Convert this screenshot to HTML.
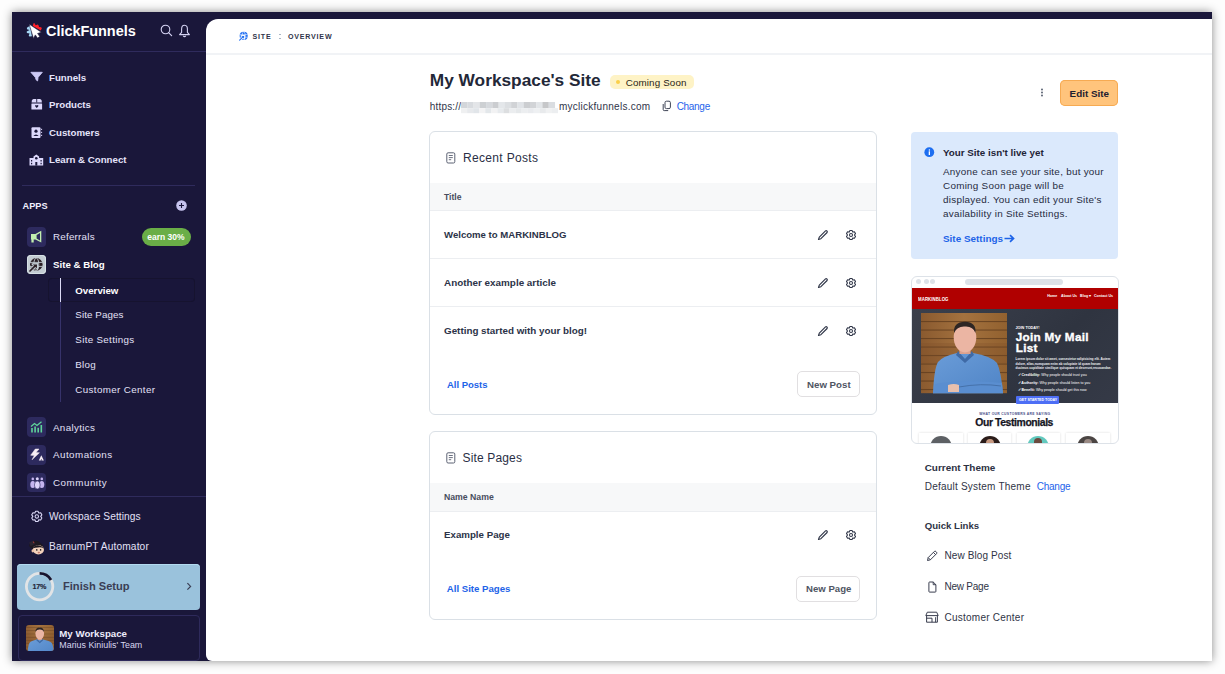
<!DOCTYPE html>
<html><head><meta charset="utf-8">
<style>
html,body{margin:0;padding:0;width:1225px;height:674px;overflow:hidden;background:#fdfdfd;font-family:"Liberation Sans",sans-serif;}
.a{position:absolute;}
.t{position:absolute;white-space:nowrap;line-height:1;}
.b{font-weight:bold;}
#win{position:absolute;left:12px;top:12px;width:1200px;height:649px;background:#1a173a;box-shadow:0 0 9px rgba(0,0,0,0.45);}
#main{position:absolute;left:206px;top:18.5px;width:1006px;height:642.5px;background:#fff;border-radius:12px 0 0 6px;}
.nav{color:#e6e4fb;font-weight:bold;font-size:9.7px;}
.side{color:#e3e1f7;font-size:10.2px;}
.ibox{position:absolute;width:19.5px;height:19.5px;border-radius:4px;background:#2d2a5e;}
svg{position:absolute;overflow:visible;}
</style></head><body>
<div id="win"></div>
<!-- SIDEBAR -->
<!-- logo -->
<svg style="left:22px;top:19px" width="24" height="22" viewBox="0 0 24 22">
  <path d="M10.8 6.9 L11.4 4.4 L12.3 3.9 L13.7 6.2 L15.6 5.4 L16.4 5.9 L17.1 7.9 L19.2 8.2 L19.8 9.3 L18.8 11.4 Z" fill="#ff2129"/>
  <path d="M8.3 6.6 L4.9 8.7 L5 10.2 L7.6 11.1 L4.7 12.5 L4.9 13.9 L7.6 14.6 L6.7 16.8 L7.5 17.6 L9.9 17.2 Z" fill="#a6d8f5"/>
  <path d="M7 5 L19.4 13.3 L15.6 14.5 L17.8 17.6 L15.5 19.1 L13.3 15.9 L11.5 19.4 Z" fill="#fff" stroke="#1a173a" stroke-width="0.6" stroke-linejoin="round"/>
</svg>
<div class="t b" style="left:46px;top:24px;font-size:14.5px;color:#fff;letter-spacing:-0.05px">ClickFunnels</div>
<svg style="left:160px;top:24px" width="14" height="14" viewBox="0 0 14 14"><circle cx="5.5" cy="5.5" r="4.3" fill="none" stroke="#d5d3f3" stroke-width="1.1"/><path d="M8.6 8.6 L11.6 11.6" stroke="#d5d3f3" stroke-width="1.2" stroke-linecap="round"/></svg>
<svg style="left:178px;top:24px" width="14" height="14" viewBox="0 0 14 14"><path d="M6.5 1.3 C4 1.3 3.6 3.4 3.6 5.2 L3.6 8.3 L1.6 10.6 L11.4 10.6 L9.4 8.3 L9.4 5.2 C9.4 3.4 9 1.3 6.5 1.3 Z" fill="none" stroke="#d5d3f3" stroke-width="1.1" stroke-linejoin="round"/><path d="M5.2 11.8 Q6.5 13.4 7.8 11.8" fill="none" stroke="#d5d3f3" stroke-width="1.1"/></svg>
<div class="a" style="left:12px;top:51px;width:194px;height:1px;background:#2f2b5c"></div>

<!-- nav -->
<svg style="left:30px;top:71px" width="13" height="11" viewBox="0 0 13 11"><path d="M0.9 1.3 L12.3 1.3 L8.1 6.3 L7.6 9.9 L6.3 9.1 L5.3 6.3 Z" fill="#cdc9f5" stroke="#cdc9f5" stroke-width="0.9" stroke-linejoin="round"/></svg>
<div class="t nav" style="left:49px;top:72.5px">Funnels</div>
<svg style="left:30.5px;top:98.5px" width="12" height="12" viewBox="0 0 12 12"><path d="M0.6 3.4 L0.9 1.6 Q1.2 0.1 2.6 0.1 L8.9 0.1 Q10.3 0.1 10.6 1.6 L10.9 3.4 Z" fill="#dcd8fb"/><rect x="5.3" y="0" width="0.9" height="3.5" fill="#1a173a"/><rect x="0.4" y="4.5" width="10.7" height="6.1" rx="0.5" fill="#dcd8fb"/><path d="M4.1 6.4 Q4.9 5.6 5.75 6.5 Q6.6 5.6 7.4 6.4 Q7.8 7.2 5.75 9 Q3.7 7.2 4.1 6.4Z" fill="#1a173a"/></svg>
<div class="t nav" style="left:49px;top:100px">Products</div>
<svg style="left:30.5px;top:126.5px" width="12" height="12" viewBox="0 0 12 12"><rect x="0.5" y="0.3" width="9" height="10.8" rx="1" fill="#dcd8fb"/><circle cx="5" cy="4.2" r="1.6" fill="#1a173a"/><path d="M2.3 9 Q5 5.8 7.7 9 Z" fill="#1a173a"/><path d="M10.6 1.8 L10.6 3 M10.6 4.8 L10.6 6 M10.6 7.8 L10.6 9" stroke="#dcd8fb" stroke-width="1"/></svg>
<div class="t nav" style="left:49px;top:127.6px">Customers</div>
<svg style="left:28.5px;top:153.5px" width="15" height="12" viewBox="0 0 15 12"><path d="M0.5 4 L4.5 4 L4.5 2.5 L7.3 0.5 L10.1 2.5 L10.1 4 L14.2 4 L14.2 11.6 L0.5 11.6 Z" fill="#dcd8fb"/><circle cx="7.3" cy="4.2" r="1.3" fill="#1a173a"/><rect x="6.3" y="8" width="2" height="3.6" fill="#1a173a"/><rect x="2" y="6" width="1.2" height="1.5" fill="#1a173a"/><rect x="2" y="8.8" width="1.2" height="1.5" fill="#1a173a"/><rect x="11.5" y="6" width="1.2" height="1.5" fill="#1a173a"/><rect x="11.5" y="8.8" width="1.2" height="1.5" fill="#1a173a"/></svg>
<div class="t nav" style="left:49px;top:155px">Learn &amp; Connect</div>
<div class="a" style="left:22px;top:185px;width:173px;height:1px;background:#2f2b5c"></div>

<!-- apps -->
<div class="t b" style="left:22.5px;top:201.5px;font-size:9.2px;color:#f1f0ff">APPS</div>
<svg style="left:176px;top:200px" width="11" height="11" viewBox="0 0 11 11"><circle cx="5.5" cy="5.5" r="5.3" fill="#c6c3ee"/><path d="M5.5 3 L5.5 8 M3 5.5 L8 5.5" stroke="#1a173a" stroke-width="1.1"/></svg>

<div class="ibox" style="left:26.7px;top:227px"></div>
<svg style="left:31px;top:231px" width="12" height="12" viewBox="0 0 12 12"><path d="M0 3 L4.4 3 L10.3 -0.2 L10.3 11.6 L4.4 8.6 L2.7 8.6 L2.7 11.4 L0.4 11.4 L0.4 8.6 L0 8.6 Z" fill="#c2eeb0"/><path d="M5.6 4 L9 2.1 L9 9.5 L5.6 7.6 Z" fill="#2d2a5e"/></svg>
<div class="t side" style="left:53px;top:232px;font-size:9.8px;letter-spacing:0.231px">Referrals</div>
<div class="a" style="left:142px;top:228px;width:48.5px;height:18px;border-radius:9px;background:#6aae47"></div>
<div class="t b" style="left:147.2px;top:232.6px;font-size:8.5px;color:#fff">earn 30%</div>

<div class="ibox" style="left:26.9px;top:255.1px;width:19px;height:19px;background:#c3ccd2;box-shadow:inset 0 0 0 1px #d6e0e5"></div>
<svg style="left:27px;top:255px" width="19" height="19" viewBox="0 0 19 19"><circle cx="9.3" cy="9.4" r="6.3" fill="#2a1e24"/><ellipse cx="9.3" cy="9.4" rx="2.5" ry="6.3" fill="none" stroke="#c3ccd2" stroke-width="0.9"/><path d="M3 7.4 L15.6 7.4 M3 11.4 L15.6 11.4" stroke="#c3ccd2" stroke-width="0.9"/><path d="M2.6 16.4 L7.6 11.4" stroke="#c3ccd2" stroke-width="3.4" stroke-linecap="round"/><path d="M5.2 9 L10.6 8.7 L10.3 14.1 Z" fill="#c3ccd2" stroke="#c3ccd2" stroke-width="1.6" stroke-linejoin="round"/><path d="M3 16 L7.6 11.4" stroke="#2a1e24" stroke-width="1.7" stroke-linecap="round"/><path d="M5.9 9.6 L10 9.4 L9.8 13.5 Z" fill="#2a1e24"/></svg>
<div class="t nav" style="left:53px;top:260.4px;font-size:9.7px;color:#fff">Site &amp; Blog</div>

<div class="a" style="left:48px;top:278px;width:147px;height:24px;border-radius:4px;background:#19163a;box-shadow:inset 0 0 0 1px #16132f"></div>
<div class="a" style="left:60px;top:278px;width:1px;height:124px;background:#36326a"></div>
<div class="a" style="left:60px;top:278px;width:1px;height:24px;background:#dcdaf6"></div>
<div class="t nav" style="left:75.3px;top:286px;color:#fff">Overview</div>
<div class="t side" style="left:75.3px;top:310px;font-size:9.8px;letter-spacing:0.078px">Site Pages</div>
<div class="t side" style="left:75.3px;top:335px;font-size:9.8px;letter-spacing:0.315px;">Site Settings</div>
<div class="t side" style="left:75.3px;top:360px;font-size:9.8px;letter-spacing:0.262px;">Blog</div>
<div class="t side" style="left:75.3px;top:385px;font-size:9.8px;letter-spacing:0.363px">Customer Center</div>

<div class="ibox" style="left:26.7px;top:417.2px"></div>
<svg style="left:30px;top:421px" width="13" height="12" viewBox="0 0 13 12"><path d="M1 5.5 L4.5 2.5 L7 4.5 L11.5 0.8" stroke="#5fd39a" stroke-width="1.3" fill="none"/><rect x="1.2" y="7" width="1.6" height="4.5" fill="#5fd39a"/><rect x="4.3" y="5.5" width="1.6" height="6" fill="#5fd39a"/><rect x="7.4" y="6.8" width="1.6" height="4.7" fill="#5fd39a"/><rect x="10.5" y="4" width="1.6" height="7.5" fill="#5fd39a"/></svg>
<div class="t side" style="left:53px;top:422.5px;font-size:9.8px;letter-spacing:0.336px">Analytics</div>
<div class="ibox" style="left:26.7px;top:445px"></div>
<svg style="left:29.5px;top:448px" width="14" height="14" viewBox="0 0 14 14"><path d="M5.3 1 L9 1 L6 4.6 L9.4 4.8 L2 11.8 L4.4 7.4 L0.7 7.2 Z" fill="#f8eef4" stroke="#f8eef4" stroke-width="0.5" stroke-linejoin="round"/><path d="M8.8 12.4 L11.3 7.2 L13.9 12.4 Z" fill="#f8eef4"/><path d="M10.6 12.4 L11.3 10.8 L12 12.4 Z" fill="#2d2a5e"/></svg>
<div class="t side" style="left:53px;top:450.2px;font-size:9.8px;letter-spacing:0.473px">Automations</div>
<div class="ibox" style="left:26.7px;top:472.8px"></div>
<svg style="left:29.5px;top:476.5px" width="15" height="13" viewBox="0 0 15 13"><circle cx="2.8" cy="1.9" r="1.3" fill="#c4b4ef"/><circle cx="11.8" cy="1.9" r="1.3" fill="#c4b4ef"/><ellipse cx="2.8" cy="7.6" rx="2.5" ry="3.5" fill="#c4b4ef"/><ellipse cx="11.8" cy="7.6" rx="2.5" ry="3.5" fill="#c4b4ef"/><circle cx="7.3" cy="1.8" r="1.5" fill="#ddd3fb"/><ellipse cx="7.3" cy="8" rx="2.9" ry="4" fill="#ddd3fb" stroke="#2d2a5e" stroke-width="0.6"/></svg>
<div class="t side" style="left:53px;top:477.8px;font-size:9.8px;letter-spacing:0.518px">Community</div>
<div class="a" style="left:12px;top:496px;width:194px;height:1px;background:#2f2b5c"></div>

<svg style="left:29.5px;top:510px" width="13" height="13" viewBox="0 0 13 13"><path d="M4.85 3.02 L5.61 1.24 L7.99 1.24 L8.75 3.02 L10.68 2.79 L11.87 4.85 L10.70 6.40 L11.87 7.95 L10.68 10.01 L8.75 9.78 L7.99 11.56 L5.61 11.56 L4.85 9.78 L2.92 10.01 L1.73 7.95 L2.90 6.40 L1.73 4.85 L2.92 2.79 Z" fill="none" stroke="#dcdaf8" stroke-width="1.05" stroke-linejoin="round"/><circle cx="6.8" cy="6.4" r="1.7" fill="none" stroke="#dcdaf8" stroke-width="1.05"/></svg>
<div class="t side" style="left:49px;top:512px;font-size:10.2px;letter-spacing:0.069px">Workspace Settings</div>
<svg style="left:27.5px;top:540px" width="18" height="15" viewBox="0 0 18 15"><path d="M1 6 Q2 1.5 6 1 L8 0.6 Q11.5 1 13 3.5 Q16 5.5 15.5 9 L4 9 Z" fill="#1d1820"/><path d="M1.2 2.6 L5.6 0.4 L6.6 4.2 L2.6 6 Z" fill="#2a2430"/><path d="M5.4 1.6 L6 3.2" stroke="#c23a3a" stroke-width="0.9"/><ellipse cx="10.4" cy="9.8" rx="5.6" ry="4.6" fill="#f3d2bc"/><path d="M4.6 8.5 Q7 4.6 11 5.4 Q14.6 5.8 15.8 8.6 Q13 6.8 10 7.4 Q7 7.4 4.6 8.5 Z" fill="#1d1820"/><circle cx="8.8" cy="9.9" r="0.8" fill="#1a1a1a"/><circle cx="12.6" cy="9.9" r="0.8" fill="#1a1a1a"/><ellipse cx="10.8" cy="12.6" rx="1.2" ry="0.8" fill="#c77a6c"/><ellipse cx="4.8" cy="10.8" rx="1.3" ry="1.6" fill="#ebc2a8"/></svg>
<div class="t side" style="left:49px;top:542.3px;font-size:10.2px;letter-spacing:0.118px">BarnumPT Automator</div>

<div class="a" style="left:17px;top:564px;width:183px;height:46px;border-radius:4px;background:#9ac2dc;box-shadow:inset 0 1px 0 #b3daf0"></div>
<svg style="left:25px;top:572px" width="30" height="30" viewBox="0 0 30 30"><circle cx="14.6" cy="14.6" r="13.2" fill="none" stroke="#e2e4e6" stroke-width="2.8"/><path d="M14.6 1.4 A13.2 13.2 0 0 1 26.03 8" fill="none" stroke="#15132f" stroke-width="2.8"/></svg>
<div class="t b" style="left:32.6px;top:583px;font-size:7.2px;color:#23263a;letter-spacing:-0.3px;-webkit-text-stroke:0.15px #23263a">17%</div>
<div class="t b" style="left:63px;top:581px;font-size:11.1px;color:#3a3e54">Finish Setup</div>
<svg style="left:185px;top:581px" width="8" height="11" viewBox="0 0 8 11"><path d="M2.4 2.2 L5.6 5.4 L2.4 8.6" fill="none" stroke="#3a3e54" stroke-width="1.2"/></svg>

<div class="a" style="left:17.5px;top:615px;width:182px;height:46px;border-radius:4px;border:1px solid #2e2a5b;box-sizing:border-box"></div>
<div class="a" style="left:26px;top:625px;width:27.5px;height:26px;border-radius:3px;overflow:hidden"><svg style="left:0;top:0" width="27.5" height="26" viewBox="8 2 72 68" preserveAspectRatio="xMidYMid slice">
  <defs><linearGradient id="wd2" x1="0" y1="0" x2="1" y2="0"><stop offset="0" stop-color="#8a5a2f"/><stop offset="0.5" stop-color="#a4723f"/><stop offset="1" stop-color="#92612f"/></linearGradient>
  <linearGradient id="sh2" x1="0" y1="0" x2="1" y2="1"><stop offset="0" stop-color="#6a9cd8"/><stop offset="1" stop-color="#4f84c6"/></linearGradient></defs>
  <rect width="86" height="80.2" fill="url(#wd2)"/>
  <rect x="0" y="8.0" width="86" height="1.1" fill="#5e3b1d" opacity="0.75"/><rect x="0" y="16.5" width="86" height="1.1" fill="#5e3b1d" opacity="0.75"/><rect x="0" y="25.0" width="86" height="1.1" fill="#5e3b1d" opacity="0.75"/><rect x="0" y="33.5" width="86" height="1.1" fill="#5e3b1d" opacity="0.75"/><rect x="0" y="42.0" width="86" height="1.1" fill="#5e3b1d" opacity="0.75"/><rect x="0" y="50.5" width="86" height="1.1" fill="#5e3b1d" opacity="0.75"/><rect x="0" y="59.0" width="86" height="1.1" fill="#5e3b1d" opacity="0.75"/><rect x="0" y="67.5" width="86" height="1.1" fill="#5e3b1d" opacity="0.75"/><rect x="0" y="76.0" width="86" height="1.1" fill="#5e3b1d" opacity="0.75"/>
  <rect x="0" y="30" width="86" height="20" fill="#7a4c26" opacity="0.25"/>
  <path d="M36 40 L52 40 Q70 43 76 50 Q80 58 82 80.2 L12 80.2 Q13 56 17 49 Q22 43 36 40 Z" fill="url(#sh2)"/>
  <path d="M37 38 L44 46 L51 38 L53 42 L44 50 L35 42 Z" fill="#3f6aa6"/>
  <path d="M14 71 Q40 66 81 70 L82 80.2 L12 80.2 Z" fill="#5a8ed0"/>
  <path d="M27 72 Q33 70 38 72 L38 79 L27 79 Z" fill="#e8c0ad"/>
  <path d="M38 74 Q60 70 80 73" stroke="#40699f" stroke-width="0.8" fill="none"/>
  <rect x="38.5" y="32" width="11" height="9" fill="#dca18e"/>
  <ellipse cx="44" cy="24.5" rx="11.3" ry="15" fill="#ebb5a3"/>
  <path d="M33 20 Q32 9 44 8.7 Q55.5 9 54.5 20 Q52 13 44 13.5 Q36 13 33 20 Z" fill="#2e2624"/>
</svg></div>
<div class="t b" style="left:59.3px;top:628.5px;font-size:9.7px;color:#eeedfc">My Workspace</div>
<div class="t" style="left:59.3px;top:640.5px;font-size:8.9px;color:#d8d6f0">Marius Kiniulis' Team</div>

<!-- MAIN -->
<div id="main"></div>
<div class="a" style="left:206px;top:53px;width:1006px;height:2px;background:#f1f3f6"></div>
<!-- breadcrumb -->
<svg style="left:239.3px;top:31.3px" width="9.8" height="9.8" viewBox="2 1.8 15.2 15.2"><circle cx="9.3" cy="9.4" r="6.3" fill="#1f6ef2"/><ellipse cx="9.3" cy="9.4" rx="2.5" ry="6.3" fill="none" stroke="#ffffff" stroke-width="0.9"/><path d="M3 7.4 L15.6 7.4 M3 11.4 L15.6 11.4" stroke="#ffffff" stroke-width="0.9"/><path d="M2.6 16.4 L7.6 11.4" stroke="#ffffff" stroke-width="3.4" stroke-linecap="round"/><path d="M5.2 9 L10.6 8.7 L10.3 14.1 Z" fill="#ffffff" stroke="#ffffff" stroke-width="1.6" stroke-linejoin="round"/><path d="M3 16 L7.6 11.4" stroke="#1f6ef2" stroke-width="1.7" stroke-linecap="round"/><path d="M5.9 9.6 L10 9.4 L9.8 13.5 Z" fill="#1f6ef2"/></svg>
<div class="t b" style="left:252.4px;top:34.2px;font-size:7.1px;letter-spacing:0.85px;color:#30344a">SITE</div>
<div class="a" style="left:279.2px;top:33.9px;width:1.4px;height:1.4px;background:#aab6c6"></div>
<div class="a" style="left:279.2px;top:37.6px;width:1.4px;height:1.4px;background:#aab6c6"></div>
<div class="t b" style="left:287.9px;top:34.2px;font-size:7.1px;letter-spacing:0.8px;color:#30344a">OVERVIEW</div>

<!-- title -->
<div class="t b" style="left:429.8px;top:71.5px;font-size:17.3px;color:#232838">My Workspace's Site</div>
<div class="a" style="left:610px;top:75px;width:84px;height:14px;border-radius:5px;background:#fef3c6"></div>
<div class="a" style="left:616.4px;top:80px;width:4px;height:4px;border-radius:2px;background:#fbd04a"></div>
<div class="t" style="left:625.7px;top:77.5px;color:#2a2418;font-size:9.8px;letter-spacing:0.142px">Coming Soon</div>
<div class="t" style="left:429.8px;top:102px;color:#30354a;font-size:10px;letter-spacing:0.169px">https://</div>
<svg style="left:461px;top:102px" width="97" height="11.2" viewBox="0 0 97 11.2"><rect x="0.00" y="0" width="6.37" height="6.2" fill="#d3d6da"/><rect x="6.27" y="0" width="6.37" height="6.2" fill="#d8dbdf"/><rect x="12.53" y="0" width="6.37" height="6.2" fill="#e3e5e8"/><rect x="18.80" y="0" width="6.37" height="6.2" fill="#cdd0d3"/><rect x="25.07" y="0" width="6.37" height="6.2" fill="#d6d9dd"/><rect x="31.33" y="0" width="6.37" height="6.2" fill="#cbcdd0"/><rect x="37.60" y="0" width="6.37" height="6.2" fill="#e4e7ea"/><rect x="43.87" y="0" width="6.37" height="6.2" fill="#dcdfe2"/><rect x="50.13" y="0" width="6.37" height="6.2" fill="#d1d3d6"/><rect x="56.40" y="0" width="6.37" height="6.2" fill="#e0e3e7"/><rect x="62.67" y="0" width="6.37" height="6.2" fill="#ccced1"/><rect x="68.93" y="0" width="6.37" height="6.2" fill="#d2d4d7"/><rect x="75.20" y="0" width="6.37" height="6.2" fill="#e2e5e8"/><rect x="81.47" y="0" width="6.37" height="6.2" fill="#c6c7c9"/><rect x="87.73" y="0" width="6.37" height="6.2" fill="#dadde1"/><rect x="0.00" y="6.2" width="6.16" height="5" fill="#eff0f1"/><rect x="6.06" y="6.2" width="6.16" height="5" fill="#e7e9ec"/><rect x="12.12" y="6.2" width="6.16" height="5" fill="#e1e5e9"/><rect x="18.19" y="6.2" width="6.16" height="5" fill="#f3f3f4"/><rect x="24.25" y="6.2" width="6.16" height="5" fill="#e3e7ea"/><rect x="30.31" y="6.2" width="6.16" height="5" fill="#f2f2f3"/><rect x="36.38" y="6.2" width="6.16" height="5" fill="#e7eaed"/><rect x="42.44" y="6.2" width="6.16" height="5" fill="#dcdee0"/><rect x="48.50" y="6.2" width="6.16" height="5" fill="#ebedef"/><rect x="54.56" y="6.2" width="6.16" height="5" fill="#e5e8ea"/><rect x="60.62" y="6.2" width="6.16" height="5" fill="#eceef0"/><rect x="66.69" y="6.2" width="6.16" height="5" fill="#e9ebee"/><rect x="72.75" y="6.2" width="6.16" height="5" fill="#eef0f2"/><rect x="78.81" y="6.2" width="6.16" height="5" fill="#e8eaec"/><rect x="84.88" y="6.2" width="6.16" height="5" fill="#f0f1f2"/><rect x="90.94" y="6.2" width="6.16" height="5" fill="#eceef0"/></svg>
<div class="t" style="left:558.9px;top:102px;color:#30354a;font-size:10px;letter-spacing:0.271px">myclickfunnels.com</div>
<svg style="left:661px;top:100px" width="11" height="12" viewBox="0 0 11 12"><rect x="4" y="1.2" width="5.4" height="7.4" rx="1.4" fill="none" stroke="#3e4456" stroke-width="1"/><path d="M2.2 4 L2.2 9.6 Q2.2 10.6 3.2 10.6 L7.2 10.6" fill="none" stroke="#3e4456" stroke-width="1"/></svg>
<div class="t" style="left:676.7px;top:102px;color:#2563eb;font-size:10px;letter-spacing:-0.306px">Change</div>

<svg style="left:1040px;top:88px" width="4" height="10" viewBox="0 0 4 10"><circle cx="2" cy="1.5" r="0.9" fill="#4b5566"/><circle cx="2" cy="4.5" r="0.9" fill="#4b5566"/><circle cx="2" cy="7.5" r="0.9" fill="#4b5566"/></svg>
<div class="a" style="left:1060px;top:80px;width:58px;height:26px;border-radius:5px;background:#ffc47c;box-shadow:inset 0 0 0 1px #f6aa52"></div>
<div class="t b" style="left:1069.6px;top:89px;font-size:9.85px;color:#1e2030">Edit Site</div>

<!-- Recent posts card -->
<div class="a" style="left:429px;top:131px;width:448px;height:284px;border:1px solid #dae0e6;border-radius:6px;box-sizing:border-box"></div>
<svg style="left:445.5px;top:152px" width="10" height="12" viewBox="0 0 10 12"><rect x="0.8" y="0.8" width="8" height="10.2" rx="1.3" fill="none" stroke="#5b6172" stroke-width="1"/><path d="M2.8 3.5 L6.8 3.5 M2.8 5.6 L6.8 5.6 M2.8 7.7 L5.2 7.7" stroke="#5b6172" stroke-width="0.9"/></svg>
<div class="t" style="left:463px;top:152.3px;color:#2a2f45;font-size:12px;letter-spacing:0.330px">Recent Posts</div>
<div class="a" style="left:430px;top:183px;width:446px;height:27.5px;background:#f7f8f9;border-bottom:1px solid #eceef1;box-sizing:border-box"></div>
<div class="t b" style="left:444px;top:192.5px;font-size:8.6px;color:#474d5e">Title</div>
<div class="t b" style="left:444px;top:230.1px;font-size:9.6px;color:#2c3348">Welcome to MARKINBLOG</div>
<div class="a" style="left:430px;top:258px;width:446px;height:1px;background:#eceef1"></div>
<div class="t b" style="left:444px;top:278.1px;font-size:9.9px;color:#2c3348">Another example article</div>
<div class="a" style="left:430px;top:306px;width:446px;height:1px;background:#eceef1"></div>
<div class="t b" style="left:444px;top:326.1px;font-size:9.83px;color:#2c3348">Getting started with your blog!</div>
<svg style="left:816.5px;top:228.5px" width="12" height="12" viewBox="0 0 12 12"><path d="M1.5 10.5 L2.3 8.1 L8.5 1.9 Q9.2 1.3 9.9 2 L10 2.1 Q10.7 2.8 10.1 3.5 L3.9 9.7 Z" fill="#fff" stroke="#2f3547" stroke-width="1.15" stroke-linejoin="round"/></svg>
<svg style="left:844.5px;top:228.5px" width="12" height="12" viewBox="0 0 12 12"><path d="M4.30 3.06 L4.94 1.42 L7.06 1.42 L7.70 3.06 L9.44 2.79 L10.49 4.63 L9.40 6.00 L10.49 7.37 L9.44 9.21 L7.70 8.94 L7.06 10.58 L4.94 10.58 L4.30 8.94 L2.56 9.21 L1.51 7.37 L2.60 6.00 L1.51 4.63 L2.56 2.79 Z" fill="none" stroke="#2f3547" stroke-width="1.05" stroke-linejoin="round"/><circle cx="6" cy="6" r="1.5" fill="none" stroke="#2f3547" stroke-width="1.05"/></svg>
<svg style="left:816.5px;top:276.5px" width="12" height="12" viewBox="0 0 12 12"><path d="M1.5 10.5 L2.3 8.1 L8.5 1.9 Q9.2 1.3 9.9 2 L10 2.1 Q10.7 2.8 10.1 3.5 L3.9 9.7 Z" fill="#fff" stroke="#2f3547" stroke-width="1.15" stroke-linejoin="round"/></svg>
<svg style="left:844.5px;top:276.5px" width="12" height="12" viewBox="0 0 12 12"><path d="M4.30 3.06 L4.94 1.42 L7.06 1.42 L7.70 3.06 L9.44 2.79 L10.49 4.63 L9.40 6.00 L10.49 7.37 L9.44 9.21 L7.70 8.94 L7.06 10.58 L4.94 10.58 L4.30 8.94 L2.56 9.21 L1.51 7.37 L2.60 6.00 L1.51 4.63 L2.56 2.79 Z" fill="none" stroke="#2f3547" stroke-width="1.05" stroke-linejoin="round"/><circle cx="6" cy="6" r="1.5" fill="none" stroke="#2f3547" stroke-width="1.05"/></svg>
<svg style="left:816.5px;top:324.5px" width="12" height="12" viewBox="0 0 12 12"><path d="M1.5 10.5 L2.3 8.1 L8.5 1.9 Q9.2 1.3 9.9 2 L10 2.1 Q10.7 2.8 10.1 3.5 L3.9 9.7 Z" fill="#fff" stroke="#2f3547" stroke-width="1.15" stroke-linejoin="round"/></svg>
<svg style="left:844.5px;top:324.5px" width="12" height="12" viewBox="0 0 12 12"><path d="M4.30 3.06 L4.94 1.42 L7.06 1.42 L7.70 3.06 L9.44 2.79 L10.49 4.63 L9.40 6.00 L10.49 7.37 L9.44 9.21 L7.70 8.94 L7.06 10.58 L4.94 10.58 L4.30 8.94 L2.56 9.21 L1.51 7.37 L2.60 6.00 L1.51 4.63 L2.56 2.79 Z" fill="none" stroke="#2f3547" stroke-width="1.05" stroke-linejoin="round"/><circle cx="6" cy="6" r="1.5" fill="none" stroke="#2f3547" stroke-width="1.05"/></svg>

<div class="t b" style="left:446.9px;top:379.8px;font-size:9.5px;color:#1d63e8">All Posts</div>
<div class="a" style="left:797px;top:371px;width:62.5px;height:26px;border:1px solid #e1dfe1;border-radius:5px;box-sizing:border-box"></div>
<div class="t b" style="left:807px;top:380px;font-size:9.7px;color:#4f5563">New Post</div>

<!-- Site pages card -->
<div class="a" style="left:429px;top:431px;width:448px;height:188.5px;border:1px solid #dae0e6;border-radius:6px;box-sizing:border-box"></div>
<svg style="left:445.5px;top:452px" width="10" height="12" viewBox="0 0 10 12"><rect x="0.8" y="0.8" width="8" height="10.2" rx="1.3" fill="none" stroke="#5b6172" stroke-width="1"/><path d="M2.8 3.5 L6.8 3.5 M2.8 5.6 L6.8 5.6 M2.8 7.7 L5.2 7.7" stroke="#5b6172" stroke-width="0.9"/></svg>
<div class="t" style="left:462.5px;top:452.3px;color:#2a2f45;font-size:12px;letter-spacing:0.151px">Site Pages</div>
<div class="a" style="left:430px;top:483px;width:446px;height:28.5px;background:#f7f8f9;border-bottom:1px solid #eceef1;box-sizing:border-box"></div>
<div class="t b" style="left:444px;top:492.5px;font-size:8.7px;color:#474d5e">Name Name</div>
<div class="t b" style="left:444px;top:530.1px;font-size:9.72px;color:#2c3348">Example Page</div>
<svg style="left:816.5px;top:529px" width="12" height="12" viewBox="0 0 12 12"><path d="M1.5 10.5 L2.3 8.1 L8.5 1.9 Q9.2 1.3 9.9 2 L10 2.1 Q10.7 2.8 10.1 3.5 L3.9 9.7 Z" fill="#fff" stroke="#2f3547" stroke-width="1.15" stroke-linejoin="round"/></svg>
<svg style="left:844.5px;top:529px" width="12" height="12" viewBox="0 0 12 12"><path d="M4.30 3.06 L4.94 1.42 L7.06 1.42 L7.70 3.06 L9.44 2.79 L10.49 4.63 L9.40 6.00 L10.49 7.37 L9.44 9.21 L7.70 8.94 L7.06 10.58 L4.94 10.58 L4.30 8.94 L2.56 9.21 L1.51 7.37 L2.60 6.00 L1.51 4.63 L2.56 2.79 Z" fill="none" stroke="#2f3547" stroke-width="1.05" stroke-linejoin="round"/><circle cx="6" cy="6" r="1.5" fill="none" stroke="#2f3547" stroke-width="1.05"/></svg>

<div class="t b" style="left:446.8px;top:584.3px;font-size:9.65px;color:#1d63e8">All Site Pages</div>
<div class="a" style="left:796px;top:575.6px;width:64px;height:26.4px;border:1px solid #e1dfe1;border-radius:5px;box-sizing:border-box"></div>
<div class="t b" style="left:806px;top:584.3px;font-size:9.6px;color:#4f5563">New Page</div>

<!-- info box -->
<div class="a" style="left:911px;top:131.5px;width:207px;height:127px;border-radius:4px;background:#dbe9fc"></div>
<svg style="left:924px;top:146.5px" width="11" height="11" viewBox="0 0 11 11"><circle cx="5.3" cy="5.2" r="4.9" fill="#1d6ef0"/><rect x="4.7" y="4.3" width="1.3" height="3.7" fill="#fff"/><circle cx="5.35" cy="2.9" r="0.75" fill="#fff"/></svg>
<div class="t b" style="left:943px;top:148.3px;font-size:9.8px;color:#1f2437">Your Site isn't live yet</div>
<div class="a" style="left:943px;top:165.2px;font-size:9.9px;letter-spacing:0.26px;line-height:13.8px;color:#262b3e;white-space:nowrap">Anyone can see your site, but your<br>Coming Soon page will be<br>displayed. You can edit your Site's<br>availability in Site Settings.</div>
<div class="t b" style="left:943px;top:234.3px;font-size:9.91px;color:#1d63e8">Site Settings</div>
<svg style="left:1004px;top:234px" width="12" height="9" viewBox="0 0 12 9"><path d="M0.5 4.5 L9 4.5 M6 1.2 L9.5 4.5 L6 7.8" fill="none" stroke="#1d63e8" stroke-width="1.7"/></svg>

<!-- preview -->
<div class="a" style="left:910.5px;top:275.5px;width:208px;height:168px;border-radius:6px;overflow:hidden;background:#fff">
 <div class="a" style="left:0;top:0;width:208px;height:12px;background:#fff"></div>
 <div class="a" style="left:5.8px;top:3.5px;width:5px;height:5px;border-radius:50%;background:#dde2e8"></div>
 <div class="a" style="left:13px;top:3.5px;width:5px;height:5px;border-radius:50%;background:#dde2e8"></div>
 <div class="a" style="left:19.8px;top:3.5px;width:5px;height:5px;border-radius:50%;background:#dde2e8"></div>
 <div class="a" style="left:54.5px;top:3px;width:98px;height:6px;border-radius:3px;background:#dde2e8"></div>
 <div class="a" style="left:0;top:12px;width:208px;height:21.5px;background:#b00000"></div>
 <div class="t b" style="left:7px;top:20px;font-size:6.2px;color:#fff;transform:scaleX(0.7);transform-origin:0 0;letter-spacing:0.1px">MARKINBLOG</div>
 <div class="t b" style="left:136.7px;top:19.2px;font-size:3.6px;color:#fff">Home</div>
 <div class="t b" style="left:150.6px;top:19.2px;font-size:3.6px;color:#fff">About Us</div>
 <div class="t b" style="left:169.6px;top:19.2px;font-size:3.6px;color:#fff">Blog ▾</div>
 <div class="t b" style="left:183.5px;top:19.2px;font-size:3.6px;color:#fff">Contact Us</div>
 <div class="a" style="left:0;top:33.5px;width:208px;height:93.5px;background:linear-gradient(135deg,#3b404c,#2f3440 60%,#353a47)"></div>
 <svg style="left:10.3px;top:37.3px" width="86" height="80.2" viewBox="0 0 86 80.2">
  <defs><linearGradient id="wd" x1="0" y1="0" x2="1" y2="0"><stop offset="0" stop-color="#8a5a2f"/><stop offset="0.5" stop-color="#a4723f"/><stop offset="1" stop-color="#92612f"/></linearGradient>
  <linearGradient id="sh" x1="0" y1="0" x2="1" y2="1"><stop offset="0" stop-color="#6a9cd8"/><stop offset="1" stop-color="#4f84c6"/></linearGradient></defs>
  <rect width="86" height="80.2" fill="url(#wd)"/>
  <rect x="0" y="8.0" width="86" height="1.1" fill="#5e3b1d" opacity="0.75"/><rect x="0" y="16.5" width="86" height="1.1" fill="#5e3b1d" opacity="0.75"/><rect x="0" y="25.0" width="86" height="1.1" fill="#5e3b1d" opacity="0.75"/><rect x="0" y="33.5" width="86" height="1.1" fill="#5e3b1d" opacity="0.75"/><rect x="0" y="42.0" width="86" height="1.1" fill="#5e3b1d" opacity="0.75"/><rect x="0" y="50.5" width="86" height="1.1" fill="#5e3b1d" opacity="0.75"/><rect x="0" y="59.0" width="86" height="1.1" fill="#5e3b1d" opacity="0.75"/><rect x="0" y="67.5" width="86" height="1.1" fill="#5e3b1d" opacity="0.75"/><rect x="0" y="76.0" width="86" height="1.1" fill="#5e3b1d" opacity="0.75"/>
  <rect x="0" y="30" width="86" height="20" fill="#7a4c26" opacity="0.25"/>
  <path d="M36 40 L52 40 Q70 43 76 50 Q80 58 82 80.2 L12 80.2 Q13 56 17 49 Q22 43 36 40 Z" fill="url(#sh)"/>
  <path d="M37 38 L44 46 L51 38 L53 42 L44 50 L35 42 Z" fill="#3f6aa6"/>
  <path d="M14 71 Q40 66 81 70 L82 80.2 L12 80.2 Z" fill="#5a8ed0"/>
  <path d="M27 72 Q33 70 38 72 L38 79 L27 79 Z" fill="#e8c0ad"/>
  <path d="M38 74 Q60 70 80 73" stroke="#40699f" stroke-width="0.8" fill="none"/>
  <rect x="38.5" y="32" width="11" height="9" fill="#dca18e"/>
  <ellipse cx="44" cy="24.5" rx="11.3" ry="15" fill="#ebb5a3"/>
  <path d="M33 20 Q32 9 44 8.7 Q55.5 9 54.5 20 Q52 13 44 13.5 Q36 13 33 20 Z" fill="#2e2624"/>
</svg>

 <div class="t b" style="left:105px;top:51.2px;font-size:3.8px;color:#fff">JOIN TODAY!</div>
 <div class="t b" style="left:105.2px;top:55px;font-size:11.7px;color:#fff;line-height:11.3px;letter-spacing:0.3px;-webkit-text-stroke:0.35px #fff">Join My Mail<br>List</div>
 <div class="a" style="left:105px;top:81.7px;font-size:3.15px;line-height:4.5px;color:#eceef2;white-space:nowrap;font-weight:bold">Lorem ipsum dolor sit amet, consectetur adipisicing elit. Autem<br>dolore, alias,numquam enim ab voluptate id quam harum<br>ducimus cupiditate similique quisquam et deserunt,recusandae.</div>
 <div class="t b" style="left:107px;top:98.8px;font-size:3.6px;color:#fff">✓ Credibility: <span style="font-weight:normal">Why people should trust you</span></div>
 <div class="t b" style="left:107px;top:106.3px;font-size:3.6px;color:#fff">✓ Authority: <span style="font-weight:normal">Why people should listen to you</span></div>
 <div class="t b" style="left:107px;top:113.3px;font-size:3.6px;color:#fff">✓ Benefit: <span style="font-weight:normal">Why people should get this now</span></div>
 <div class="a" style="left:105.2px;top:120.9px;width:43.2px;height:7.4px;border-radius:1px;background:#4d6ef5"></div>
 <div class="t b" style="left:108.5px;top:123px;font-size:3.6px;color:#fff">GET STARTED TODAY</div>
 <div class="t b" style="left:68.8px;top:137px;font-size:3.4px;color:#4b4f8a;letter-spacing:0.3px">WHAT OUR CUSTOMERS ARE SAYING</div>
 <div class="t b" style="left:64.8px;top:142px;font-size:10.4px;color:#14141e;letter-spacing:-0.4px;-webkit-text-stroke:0.25px #14141e">Our Testimonials</div>
 <div class="a" style="left:8px;top:157.8px;width:44px;height:14px;background:#fff;box-shadow:0 0 2.5px rgba(0,0,0,0.14)"></div>
 <div class="a" style="left:57px;top:157.8px;width:43.5px;height:14px;background:#fff;box-shadow:0 0 2.5px rgba(0,0,0,0.14)"></div>
 <div class="a" style="left:106px;top:157.8px;width:43.5px;height:14px;background:#fff;box-shadow:0 0 2.5px rgba(0,0,0,0.14)"></div>
 <div class="a" style="left:155px;top:157.8px;width:44px;height:14px;background:#fff;box-shadow:0 0 2.5px rgba(0,0,0,0.14)"></div>
 <div class="a" style="left:19.2px;top:160.4px;width:22.4px;height:22.4px;border-radius:50%;background:#5d6064"></div>
 <div class="a" style="left:68.4px;top:160.4px;width:22px;height:22px;border-radius:50%;background:#2a1c19"><div class="a" style="left:7px;top:3px;width:8px;height:10px;border-radius:4px;background:#c79a82"></div></div>
 <div class="a" style="left:116.8px;top:160.4px;width:22px;height:22px;border-radius:50%;background:#62c9be"><div class="a" style="left:7px;top:2px;width:8px;height:10px;border-radius:4px;background:#6b4a3e"></div></div>
 <div class="a" style="left:166.2px;top:160.4px;width:22px;height:22px;border-radius:50%;background:#4b4543"><div class="a" style="left:7px;top:3px;width:8px;height:10px;border-radius:4px;background:#9a8a84"></div></div>
</div>


<div class="a" style="left:910.5px;top:275.5px;width:208px;height:168px;border:1px solid #dde2e8;border-radius:6px;box-sizing:border-box"></div>
<!-- theme -->
<div class="t b" style="left:924.7px;top:463.2px;font-size:9.93px;color:#2c3142">Current Theme</div>
<div class="t" style="left:924.7px;top:482px;color:#2f3446;font-size:10px;letter-spacing:0.225px">Default System Theme</div>
<div class="t" style="left:1036.7px;top:482px;color:#2563eb;font-size:10px;letter-spacing:-0.226px">Change</div>
<div class="t b" style="left:924.7px;top:521px;font-size:9.62px;color:#2f3446">Quick Links</div>
<svg style="left:926px;top:549.5px" width="12" height="12" viewBox="0 0 12 12"><path d="M1.5 10.5 L2.2 7.6 L8.4 1.4 Q9.2 0.8 10 1.6 L10.4 2 Q11.2 2.8 10.6 3.6 L4.4 9.8 Z" fill="none" stroke="#2f3446" stroke-width="0.95" stroke-linejoin="round"/><path d="M7.4 2.4 L9.6 4.6 M2.2 7.6 L4.4 9.8" stroke="#2f3446" stroke-width="0.9"/></svg>
<div class="t" style="left:944.5px;top:551.4px;color:#2f3446;font-size:10px;letter-spacing:0.101px">New Blog Post</div>
<svg style="left:927px;top:580.5px" width="10" height="12" viewBox="0 0 10 12"><path d="M1.9 1.7 Q1.9 1 2.6 1 L6.2 1 L8.9 3.7 L8.9 10.4 Q8.9 11.1 8.2 11.1 L2.6 11.1 Q1.9 11.1 1.9 10.4 Z" fill="none" stroke="#2f3446" stroke-width="0.95" stroke-linejoin="round"/><path d="M6.2 1 L6.2 3.7 L8.9 3.7" fill="none" stroke="#2f3446" stroke-width="0.9"/></svg>
<div class="t" style="left:944.5px;top:582.2px;color:#2f3446;font-size:10px;letter-spacing:-0.234px">New Page</div>
<svg style="left:925px;top:611px" width="14" height="12" viewBox="0 0 14 12"><path d="M2.3 1.2 L11.7 1.2 L13.2 4.6 L0.8 4.6 Z" fill="none" stroke="#2f3446" stroke-width="0.95" stroke-linejoin="round"/><path d="M1.6 4.6 L1.6 11.2 L12.4 11.2 L12.4 4.6" fill="none" stroke="#2f3446" stroke-width="0.95"/><path d="M1.6 7.2 L7 7.2 L7 11.2" fill="none" stroke="#2f3446" stroke-width="0.95"/><path d="M10.6 6.2 L10.6 11.2" stroke="#2f3446" stroke-width="0.9"/></svg>
<div class="t" style="left:944.5px;top:613px;color:#2f3446;font-size:10px;letter-spacing:0.240px">Customer Center</div>

</body></html>
